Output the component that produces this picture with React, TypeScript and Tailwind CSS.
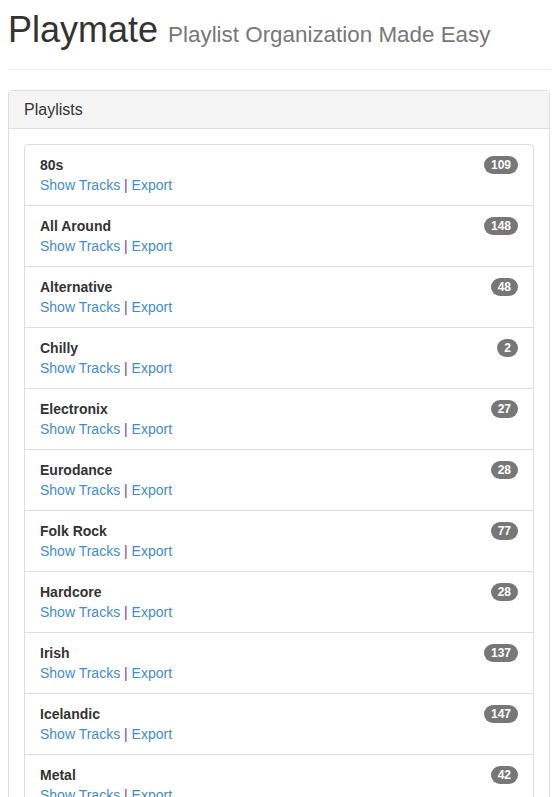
const playlists = [
  { name: "80s", count: 109 },
  { name: "All Around", count: 148 },
  { name: "Alternative", count: 48 },
  { name: "Chilly", count: 2 },
  { name: "Electronix", count: 27 },
  { name: "Eurodance", count: 28 },
  { name: "Folk Rock", count: 77 },
  { name: "Hardcore", count: 28 },
  { name: "Irish", count: 137 },
  { name: "Icelandic", count: 147 },
  { name: "Metal", count: 42 },
  { name: "Pop", count: 95 },
  { name: "Rock", count: 120 },
];

const App = () => {
  return (
    <div className="px-2 text-[14px] leading-[20px] text-[#333] font-['Liberation_Sans',Arial,sans-serif]">
      {/* Header */}
      <div className="mt-[10px] pb-[9px] mb-5 border-b border-[#eee]">
        <h1 className="text-[36px] leading-[1.1] mb-[10px] font-normal">
          Playmate <small className="text-[22.4px] text-[#777]">Playlist Organization Made Easy</small>
        </h1>
      </div>

      {/* Playlists panel */}
      <div className="border border-[#ddd] rounded bg-white mb-5">
        <div className="bg-[#f5f5f5] border-b border-[#ddd] rounded-t px-[15px] py-[10px]">
          <h3 className="text-[16px] leading-[1.1]">Playlists</h3>
        </div>
        <div className="p-[15px]">
          <ul>
            {playlists.map((p, i) => (
              <li
                key={p.name}
                className={
                  "flex justify-between items-start border border-[#ddd] px-[15px] py-[10px] -mb-px " +
                  (i === 0 ? "rounded-t " : "") +
                  (i === playlists.length - 1 ? "rounded-b" : "")
                }
              >
                <div>
                  <div className="font-bold">{p.name}</div>
                  <div>
                    <a href="#" className="text-[#428bca]">Show Tracks</a>
                    <span className="text-[#7d3a86]"> | </span>
                    <a href="#" className="text-[#428bca]">Export</a>
                  </div>
                </div>
                <span className="mt-[1px] inline-block bg-[#777] text-white text-[12px] font-bold leading-none px-[7px] py-[3px] rounded-[10px]">
                  {p.count}
                </span>
              </li>
            ))}
          </ul>
        </div>
      </div>
    </div>
  );
};

export default App;
